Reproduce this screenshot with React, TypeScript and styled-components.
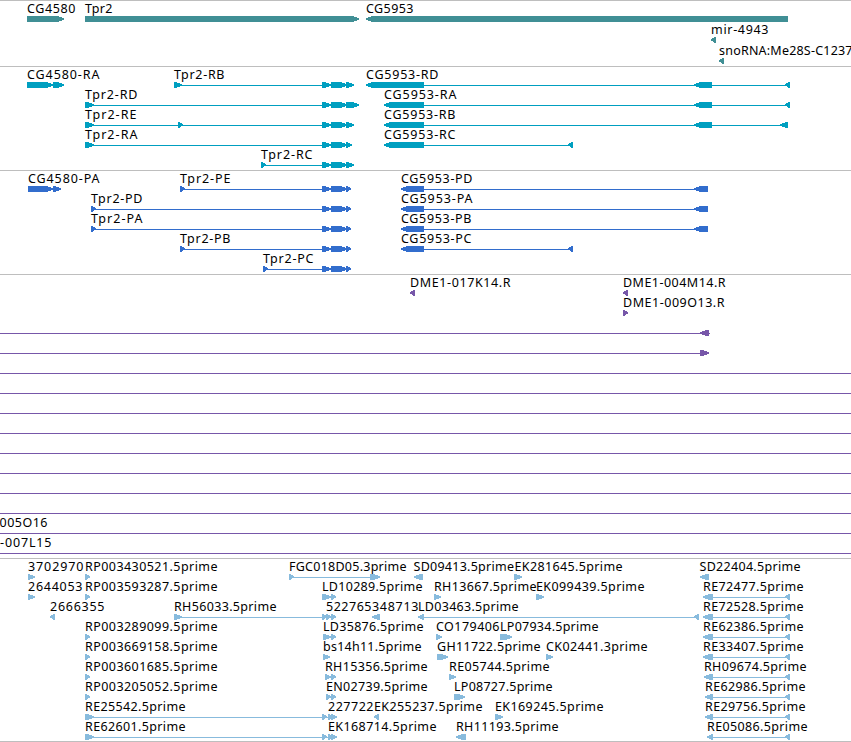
import React from "react";
import styled, { createGlobalStyle } from "styled-components";

const COLOR = {
  GENE: "#408f95",
  TRANSCRIPT: "#009fc0",
  PROTEIN: "#326dcd",
  CLONE: "#7757a9",
  EST: "#88bbdd",
  BORDER: "#bebebe"
};

const WIDTH = 851;

type Strand = "+" | "-";

interface Feature {
  // name, ink start, ink end
  label?: [string, number, number];
  strand?: Strand;
  blocks?: number[][];
  line?: number[];
}

const GlobalStyle = createGlobalStyle`
  body {
    margin: 0;
    background-color: white;
    overflow: hidden;
  }
`;

const Browser = styled.main`
  display: flex;
  flex-direction: column;
  width: ${WIDTH}px;
  height: 742px;
  overflow: hidden;
  background-color: white;
`;

const TrackContainer = styled.section<{ $gap: number }>`
  display: flex;
  flex-direction: column;
  flex-shrink: 0;
  padding-bottom: ${props => props.$gap}px;
  border-top: 1px solid ${COLOR.BORDER};
`;

const Lane = styled.svg<{ $height: number }>`
  display: block;
  flex-shrink: 0;
  width: ${WIDTH}px;
  height: ${props => props.$height}px;
  overflow: visible;
`;

const Label = styled.text`
  font-family: "Noto Sans", "Open Sans", sans-serif;
  font-size: 12.5px;
  fill: black;
`;

const Block = styled.polygon<{ $color: string }>`
  fill: ${props => props.$color};
  shape-rendering: crispEdges;
`;

const Intron = styled.rect<{ $color: string }>`
  fill: ${props => props.$color};
  shape-rendering: crispEdges;
`;

const End = styled.div`
  height: 1px;
  flex-shrink: 0;
  background-color: ${COLOR.BORDER};
`;

const arrow = (start: number, end: number, strand: Strand) => {
  const head = Math.min(6, end - start - 1);
  if (strand === "+") {
    const neck = end - head;
    return `${start},15 ${neck},15 ${end},17.3 ${end},18.6 ${neck},21 ${start},21`;
  }
  const neck = start + head;
  return `${end},15 ${neck},15 ${start},17.3 ${start},18.6 ${neck},21 ${end},21`;
};

const FeatureGlyph = ({ feature, color }: { feature: Feature; color: string }) => {
  const { label, blocks = [], strand = "+" } = feature;
  const line =
    feature.line ||
    (blocks.length > 1 ? [blocks[0][0], blocks[blocks.length - 1][1]] : null);
  return (
    <g>
      {line && (
        <Intron $color={color} x={line[0]} y={18} width={line[1] - line[0]} height={1} />
      )}
      {blocks.map(([start, end]) => (
        <Block key={start} $color={color} points={arrow(start, end, strand)} />
      ))}
      {label && (
        <Label x={label[1]} y={12} textLength={label[2] - label[1] + 0.5}>
          {label[0]}
        </Label>
      )}
    </g>
  );
};

interface TrackProps {
  color: string;
  rows: Feature[][];
  rowHeight?: number;
  gap?: number;
}

const Track = ({ color, rows, rowHeight = 20, gap = 3 }: TrackProps) => (
  <TrackContainer $gap={gap}>
    {rows.map((row, i) => (
      <Lane key={i} $height={rowHeight}>
        {row.map((feature, j) => (
          <FeatureGlyph key={j} feature={feature} color={color} />
        ))}
      </Lane>
    ))}
  </TrackContainer>
);

const feat = (
  name: string,
  from: number,
  to: number,
  strand: Strand,
  ...blocks: number[][]
): Feature => ({ label: [name, from, to], strand, blocks });

const genes: Feature[][] = [
  [
    feat("CG4580", 27, 75, "+", [27, 64]),
    feat("Tpr2", 85, 112, "+", [85, 359]),
    feat("CG5953", 366, 413, "-", [366, 788])
  ],
  [feat("mir-4943", 711, 768, "-", [711, 716])],
  [feat("snoRNA:Me28S-C1237", 719, 852, "-", [719, 724])]
];

const transcripts: Feature[][] = [
  [
    feat("CG4580-RA", 27, 99, "+", [27, 53], [53, 64]),
    feat("Tpr2-RB", 174, 224, "+", [174, 182], [322, 331], [331, 347], [346, 354]),
    feat("CG5953-RD", 366, 438, "-", [366, 424], [694, 712], [785, 790])
  ],
  [
    feat("Tpr2-RD", 85, 137, "+", [85, 94], [322, 331], [331, 347], [346, 359]),
    feat("CG5953-RA", 384, 456, "-", [384, 424], [694, 712], [785, 790])
  ],
  [
    feat("Tpr2-RE", 85, 136, "+", [85, 94], [178, 183], [322, 331], [331, 347], [346, 354]),
    feat("CG5953-RB", 384, 455, "-", [384, 424], [694, 712], [780, 788])
  ],
  [
    feat("Tpr2-RA", 85, 137, "+", [85, 94], [322, 331], [331, 347], [346, 352]),
    feat("CG5953-RC", 384, 455, "-", [384, 424], [568, 573])
  ],
  [feat("Tpr2-RC", 261, 312, "+", [261, 266], [322, 331], [331, 347], [346, 354])]
];

const proteins: Feature[][] = [
  [
    feat("CG4580-PA", 28, 99, "+", [28, 53], [53, 61]),
    feat("Tpr2-PE", 180, 230, "+", [180, 185], [322, 331], [331, 347], [346, 351]),
    feat("CG5953-PD", 401, 472, "-", [401, 424], [694, 708])
  ],
  [
    feat("Tpr2-PD", 91, 142, "+", [91, 96], [322, 331], [331, 347], [346, 351]),
    feat("CG5953-PA", 401, 472, "-", [401, 424], [694, 708])
  ],
  [
    feat("Tpr2-PA", 91, 142, "+", [91, 96], [322, 331], [331, 347], [346, 351]),
    feat("CG5953-PB", 401, 471, "-", [401, 424], [694, 708])
  ],
  [
    feat("Tpr2-PB", 180, 230, "+", [180, 185], [322, 331], [331, 347], [346, 351]),
    feat("CG5953-PC", 401, 471, "-", [401, 424], [568, 573])
  ],
  [feat("Tpr2-PC", 263, 313, "+", [263, 268], [322, 331], [331, 347], [346, 351])]
];

const fullLine: Feature = { line: [0, WIDTH] };

const clones: Feature[][] = [
  [
    feat("DME1-017K14.R", 410, 510, "-", [410, 415]),
    feat("DME1-004M14.R", 623, 725, "-", [623, 628])
  ],
  [feat("DME1-009O13.R", 623, 724, "+", [623, 628])],
  [{ line: [0, 710], strand: "-", blocks: [[700, 709]] }],
  [{ line: [0, 709], strand: "+", blocks: [[700, 709]] }],
  ...Array.from({ length: 8 }, () => [fullLine]),
  [{ ...fullLine, label: ["005O16", -0.5, 47] }],
  [{ ...fullLine, label: ["-007L15", 0, 51] }]
];

const ests: Feature[][] = [
  [
    feat("3702970", 28, 83, "+", [28, 35]),
    feat("RP003430521.5prime", 85, 217, "+", [85, 90]),
    feat("FGC018D05.3prime", 289, 406, "+", [289, 294], [370, 380]),
    feat("SD09413.5prime", 413.5, 513.5, "-", [414, 423]),
    feat("EK281645.5prime", 514.5, 622, "+", [514, 522]),
    feat("SD22404.5prime", 699.5, 800, "-", [700, 709])
  ],
  [
    feat("2644053", 28, 82, "+", [28, 35]),
    feat("RP003593287.5prime", 85, 217, "+", [85, 90]),
    feat("LD10289.5prime", 322, 422, "+", [322, 331], [331, 336]),
    feat("RH13667.5prime", 434, 536, "+", [434, 441]),
    feat("EK099439.5prime", 536, 644, "+", [536, 544]),
    feat("RE72477.5prime", 703, 803, "-", [703, 713], [785, 790])
  ],
  [
    feat("2666355", 50, 104, "-", [50, 55]),
    feat("RH56033.5prime", 174, 276, "+", [174, 182], [322, 327], [326, 331], [331, 336]),
    feat("522765", 326, 371, "+"),
    feat("348713", 372, 418, "-", [372, 380]),
    feat("LD03463.5prime", 418, 518, "-", [418, 424], [694, 699]),
    feat("RE72528.5prime", 703, 803, "-", [703, 713], [785, 790])
  ],
  [
    feat("RP003289099.5prime", 85, 217, "+", [85, 90]),
    feat("LD35876.5prime", 323, 423, "+", [323, 331], [331, 336]),
    feat("CO179406", 436, 499, "+", [436, 442]),
    feat("LP07934.5prime", 500, 598, "+", [500, 512]),
    feat("RE62386.5prime", 703, 803, "-", [703, 713], [785, 790])
  ],
  [
    feat("RP003669158.5prime", 85, 217, "+", [85, 90]),
    feat("bs14h11.5prime", 323, 421, "+", [323, 330]),
    feat("GH11722.5prime", 437, 540, "+", [437, 448]),
    feat("CK02441.3prime", 546, 647, "+", [546, 553]),
    feat("RE33407.5prime", 703, 803, "-", [703, 713], [785, 790])
  ],
  [
    feat("RP003601685.5prime", 85, 217, "+", [85, 90]),
    feat("RH15356.5prime", 325, 427, "+", [325, 331], [331, 336]),
    feat("RE05744.5prime", 449, 549, "+", [449, 456]),
    feat("RH09674.5prime", 704, 806, "-", [704, 713], [785, 790])
  ],
  [
    feat("RP003205052.5prime", 85, 217, "+", [85, 90]),
    feat("EN02739.5prime", 326, 427, "+", [326, 331], [331, 336]),
    feat("LP08727.5prime", 454, 552, "+", [454, 465]),
    feat("RE62986.5prime", 705, 805, "-", [705, 713], [785, 790])
  ],
  [
    feat("RE25542.5prime", 85, 185, "+", [85, 94], [322, 327], [328, 333], [331, 337]),
    feat("227722", 328, 373, "+"),
    feat("EK255237.5prime", 374, 482, "-", [374, 379]),
    feat("EK169245.5prime", 495, 603, "+", [495, 503]),
    feat("RE29756.5prime", 705, 805, "-", [705, 713], [785, 790])
  ],
  [
    feat("RE62601.5prime", 85, 185, "+", [85, 94], [322, 327], [328, 333], [331, 337]),
    feat("EK168714.5prime", 328, 436, "+"),
    feat("RH11193.5prime", 456, 558, "-", [456, 466]),
    feat("RE05086.5prime", 707, 807, "-", [707, 713], [785, 790])
  ]
];

const App = () => {
  return (
    <>
      <GlobalStyle />
      <Browser>
        <Track color={COLOR.GENE} rows={genes} rowHeight={21} gap={2} />
        <Track color={COLOR.TRANSCRIPT} rows={transcripts} />
        <Track color={COLOR.PROTEIN} rows={proteins} />
        <Track color={COLOR.CLONE} rows={clones} />
        <Track color={COLOR.EST} rows={ests} gap={2} />
        <End />
      </Browser>
    </>
  );
};

export default App;
